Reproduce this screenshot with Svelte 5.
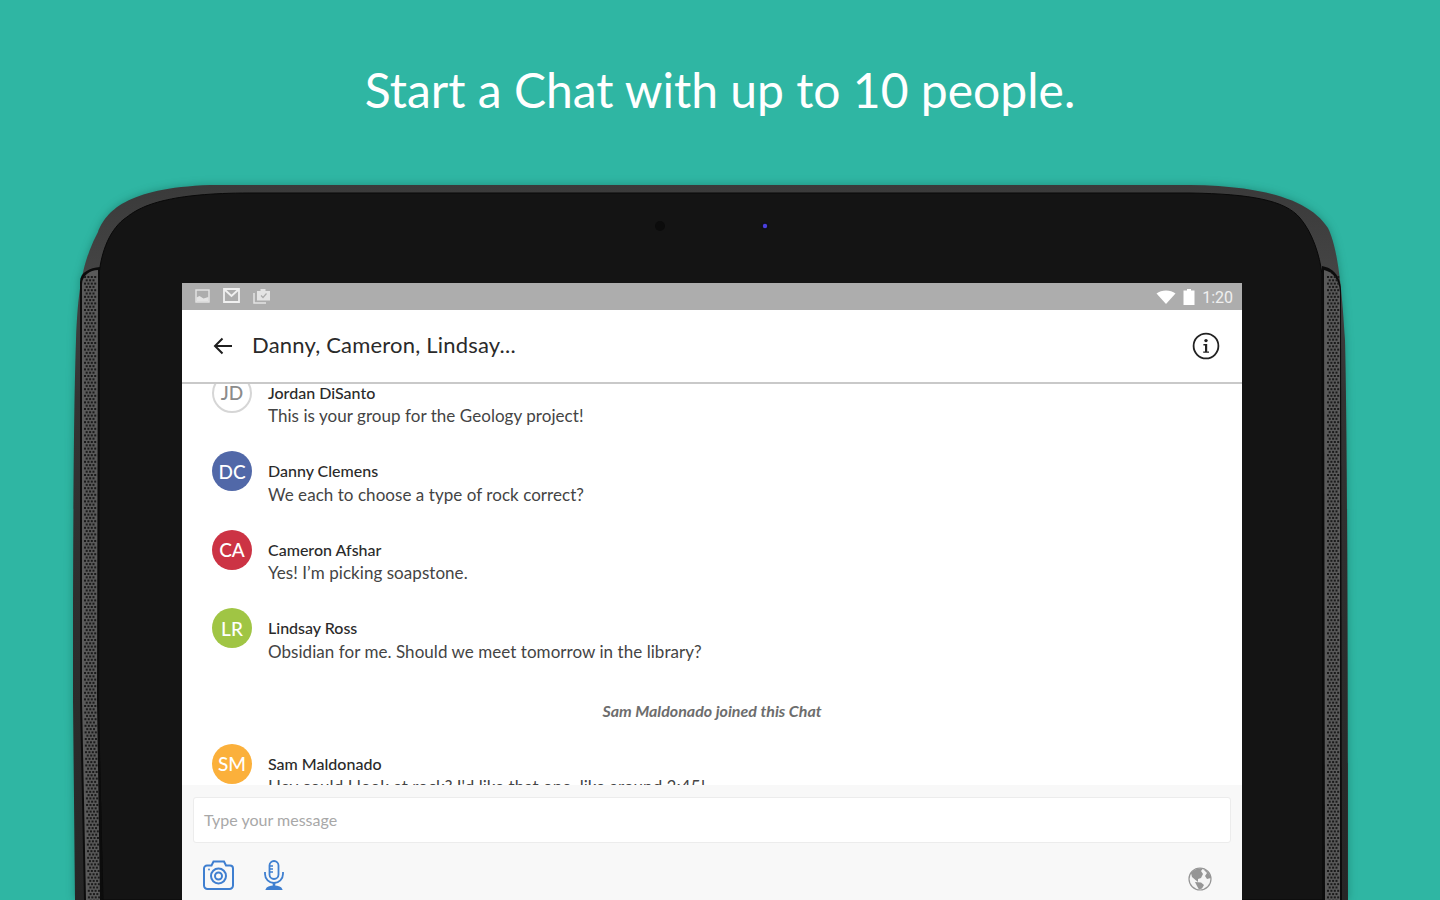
<script lang="ts">
  const messages = [
    { initials: 'JD', name: 'Jordan DiSanto', text: 'This is your group for the Geology project!', color: '', outline: true },
    { initials: 'DC', name: 'Danny Clemens', text: 'We each to choose a type of rock correct?', color: '#5168a8' },
    { initials: 'CA', name: 'Cameron Afshar', text: 'Yes! I’m picking soapstone.', color: '#cc3344' },
    { initials: 'LR', name: 'Lindsay Ross', text: 'Obsidian for me. Should we meet tomorrow in the library?', color: '#a0c544' }
  ];

  // speaker grille dots, staggered like the perforated strip on the reference
  function grille(start: number, drift: number) {
    const dots: { x: number; y: number }[] = [];
    let row = 0;
    for (let y = 276; y < 900; y += 3.3) {
      const left = start + (y > 700 ? (drift * (y - 700)) / 200 : 0);
      const odd = row % 2 === 1;
      for (let c = 0; c < (odd ? 3 : 4); c++) {
        dots.push({ x: left + c * 3.4 + (odd ? 1.7 : 0), y });
      }
      row++;
    }
    return dots;
  }

  const leftDots = grille(84, 4);
  const rightDots = grille(1327, 0);
</script>

<div class="page">
  <svg class="device" width="1440" height="900" viewBox="0 0 1440 900" aria-hidden="true">
    <defs>
      <linearGradient id="rim" x1="0" y1="0" x2="0" y2="1">
        <stop offset="0" stop-color="#3a3a3a" />
        <stop offset="0.12" stop-color="#444444" />
        <stop offset="0.3" stop-color="#333333" />
        <stop offset="1" stop-color="#262626" />
      </linearGradient>
    </defs>
    <path
      d="M75 900 L73 700 C73 500 74 400 76 340 C78 290 82 262 98 232 C106 212 125 188 210 185 L1190 185 C1265 186 1310 200 1328 228 C1338 248 1342 290 1345 340 C1347 420 1348 600 1348 900 Z"
      fill="url(#rim)"
    />
    <path
      d="M103 900 L98 700 L99 275 C101 252 110 228 127 217 C142 205 170 193 250 193 L1190 193 C1250 194 1285 200 1300 218 C1312 232 1320 255 1322 275 L1323 900 Z"
      fill="#141414"
      stroke="#090909"
      stroke-width="1"
    />
    <path d="M84 900 L80 700 L80 282 C80 272 90 268 100 267 L99 700 L103 900 Z" fill="#0c0c0c" />
    <path d="M86 900 L82 700 L82 284 C82 276 90 270 98 270 L97 700 L100 900 Z" fill="#5a5a5a" />
    <path d="M1322 266 C1332 268 1340 274 1341 290 L1342 900 L1323 900 Z" fill="#0c0c0c" />
    <path d="M1324 270 C1332 272 1339 278 1340 292 L1340 900 L1325 900 Z" fill="#5a5a5a" />
    {#each leftDots as d}
      <rect x={d.x} y={d.y} width="2" height="2" fill="#1a1a1a" />
    {/each}
    {#each rightDots as d}
      <rect x={d.x} y={d.y} width="2" height="2" fill="#1a1a1a" />
    {/each}
    <circle cx="660" cy="226" r="5" fill="#0c0c0c" />
    <circle cx="765" cy="226" r="4" fill="#101018" />
    <circle cx="765" cy="226" r="2.2" fill="#4a3fe0" />
  </svg>

  <h1>Start a Chat with up to 10 people.</h1>

  <div class="screen">
    <div class="status">
      <div class="status-icons">
        <svg width="15" height="14" viewBox="0 0 15 14">
          <rect x="1" y="1" width="13" height="12" fill="none" stroke="#e4e4e4" stroke-width="1.4" />
          <path d="M1.5 12.5 V8.5 L4.5 7 L8.5 9.5 L13.5 8 V12.5 Z" fill="#e4e4e4" />
        </svg>
        <svg class="mail" width="17" height="15" viewBox="0 0 17 15">
          <path d="M1 1 H16 V14 H1 Z" fill="none" stroke="#f0f0f0" stroke-width="1.8" />
          <path d="M1.5 1.5 L8.5 8 L15.5 1.5" fill="none" stroke="#f0f0f0" stroke-width="2" />
        </svg>
        <svg width="18" height="16" viewBox="0 0 18 16">
          <path d="M1 5 V15 H13" fill="none" stroke="#e4e4e4" stroke-width="1.5" />
          <path d="M4 3 H7.5 V1 H12.5 V3 H17 V12.5 H4 Z" fill="#e4e4e4" />
          <path d="M8 7.5 L10 9.5 L13.5 5.5" fill="none" stroke="#adadad" stroke-width="1.2" />
        </svg>
      </div>
      <div class="status-right">
        <svg width="20" height="14" viewBox="0 0 20 14"><path d="M0.5 3.5 C5.5 -0.5 14.5 -0.5 19.5 3.5 L10 14 Z" fill="#fff" /></svg>
        <svg width="12" height="16" viewBox="0 0 12 16"><path d="M4 0 H8 V1.5 H11.5 V16 H0.5 V1.5 H4 Z" fill="#fff" /></svg>
        <span class="clock">1:20</span>
      </div>
    </div>

    <header class="appbar">
      <svg class="back" width="20" height="18" viewBox="0 0 20 18">
        <path d="M19 9 H2 M9.5 1.5 L2 9 L9.5 16.5" fill="none" stroke="#1f1f1f" stroke-width="2" />
      </svg>
      <span class="title">Danny, Cameron, Lindsay...</span>
      <svg class="info" width="28" height="28" viewBox="0 0 28 28">
        <circle cx="14" cy="14" r="12.4" fill="none" stroke="#222" stroke-width="1.8" />
        <circle cx="14" cy="8.6" r="1.7" fill="#222" />
        <path d="M11.4 12 H15.2 V19.4 H17 V20.8 H11.2 V19.4 H13 V13.4 H11.4 Z" fill="#222" />
      </svg>
    </header>

    <div class="thread">
      <div class="scroller">
        {#each messages as m}
          <div class="message">
            <div class="avatar" class:outline={m.outline} style:background={m.color}>{m.initials}</div>
            <div class="body">
              <div class="name">{m.name}</div>
              <div class="text">{m.text}</div>
            </div>
          </div>
        {/each}

        <div class="notice">Sam Maldonado joined this Chat</div>

        <div class="message">
          <div class="avatar" style:background="#fbb03b">SM</div>
          <div class="body">
            <div class="name">Sam Maldonado</div>
            <div class="text">Hey could I look at rock? I'd like that one, like around 3:45!</div>
          </div>
        </div>
      </div>
    </div>

    <div class="composer">
      <div class="input">Type your message</div>
      <div class="tools">
        <svg class="camera" width="32" height="32" viewBox="0 0 32 32" fill="none" stroke="#3f7fd0" stroke-width="2">
          <path d="M4 6.5 H8.5 L10.5 2.5 H21 L23 6.5 H27 A3 3 0 0 1 30 9.5 V26.5 A3.5 3.5 0 0 1 26.5 30 H4.5 A3.5 3.5 0 0 1 1 26.5 V9.5 A3 3 0 0 1 4 6.5 Z" />
          <circle cx="15.5" cy="17" r="7.5" />
          <circle cx="15.5" cy="17" r="3.5" />
          <circle cx="6" cy="10.5" r="0.9" fill="#3f7fd0" stroke="none" />
        </svg>
        <svg class="mic" width="20" height="30" viewBox="0 0 20 30" fill="none" stroke="#3f7fd0" stroke-width="1.8">
          <rect x="5.5" y="1" width="9" height="18" rx="4.5" />
          <path d="M1 12 V14 A9 9 0 0 0 19 14 V12" />
          <path d="M5.5 6 H9 M5.5 9 H9 M5.5 12 H9" stroke-width="1.3" />
          <path d="M10 22 V26" stroke-width="2.6" />
          <path d="M2.5 29.5 C4 25.5 16 25.5 17.5 29.5 Z" fill="#3f7fd0" />
        </svg>
        <svg class="globe" width="24" height="24" viewBox="0 0 24 24">
          <circle cx="12" cy="12" r="11" fill="#f4f4f4" stroke="#959595" stroke-width="1.2" />
          <path d="M3 6 C6 1.5 12 0.5 15 1.5 L13 4 L15 7 L13 11 L10 12 L10 15 L7.5 13 L4 10 Z" fill="#959595" />
          <path d="M15 2 C19 3 22 7 22.8 11 L19 12 L17 9 L19 6 Z" fill="#959595" />
          <path d="M7 15 L13 15.5 L16 18 L14 21.5 L11 22.5 L9 19 Z" fill="#959595" />
        </svg>
      </div>
    </div>
  </div>
</div>

<style>
  :global(body) {
    margin: 0;
  }

  .page {
    position: relative;
    width: 1440px;
    height: 900px;
    overflow: hidden;
    background: #2fb6a3;
    font-family: Lato, 'Open Sans', sans-serif;
  }

  .device {
    position: absolute;
    left: 0;
    top: 0;
    filter: drop-shadow(0 0 4px rgba(0, 60, 50, 0.35));
  }

  h1 {
    position: relative;
    height: 283px;
    margin: 0;
    padding-top: 60px;
    box-sizing: border-box;
    text-align: center;
    font-size: 48px;
    line-height: 60px;
    font-weight: 400;
    color: #fff;
  }

  .screen {
    position: relative;
    width: 1060px;
    height: 617px;
    margin-left: 182px;
    display: flex;
    flex-direction: column;
    background: #fff;
  }

  .status {
    height: 27px;
    flex: none;
    display: flex;
    align-items: center;
    justify-content: space-between;
    padding: 0 9px 0 13px;
    background: #adadad;
  }

  .status-icons {
    display: flex;
    align-items: center;
    gap: 13px;
    margin-bottom: 2px;
  }

  .status-right {
    display: flex;
    align-items: center;
    gap: 7px;
  }

  .clock {
    padding-top: 1px;
    font-family: Roboto, sans-serif;
    font-size: 16px;
    color: #f0f0f0;
  }

  .appbar {
    height: 72px;
    flex: none;
    display: flex;
    align-items: center;
    padding: 0 22px 0 31px;
    border-bottom: 2px solid #c9c9c9;
  }

  .title {
    margin-left: 19px;
    padding-bottom: 4px;
    flex: 1;
    font-size: 22px;
    letter-spacing: 0.2px;
    color: #2a2a2a;
  }

  .thread {
    flex: 1;
    min-height: 0;
    overflow: hidden;
  }

  .scroller {
    display: flex;
    flex-direction: column;
    margin-top: -11.5px;
    padding-left: 30px;
  }

  .message {
    display: flex;
    gap: 16px;
    height: 78.6px;
  }

  .avatar {
    width: 40px;
    height: 40px;
    flex: none;
    box-sizing: border-box;
    border-radius: 50%;
    display: flex;
    align-items: center;
    justify-content: center;
    font-size: 19px;
    font-weight: 500;
    color: #fff;
  }

  .avatar.outline {
    border: 2px solid #d6d6d6;
    color: #8b8b8b;
  }

  .body {
    padding-top: 10px;
  }

  .name {
    font-size: 16px;
    line-height: 20px;
    font-weight: 500;
    color: #2a2a2a;
  }

  .text {
    margin-top: 1.5px;
    font-size: 17px;
    line-height: 24px;
    letter-spacing: 0.05px;
    color: #444;
  }

  .notice {
    height: 59px;
    margin: -2px 0 0 -30px;
    padding-top: 16px;
    box-sizing: border-box;
    text-align: center;
    font-size: 16px;
    font-style: italic;
    font-weight: 700;
    color: #6d6d6d;
  }

  .composer {
    height: 115px;
    flex: none;
    box-sizing: border-box;
    padding: 12px 11px 0;
    background: #f8f8f8;
  }

  .input {
    height: 46px;
    box-sizing: border-box;
    padding: 0 10px 2px;
    display: flex;
    align-items: center;
    background: #fff;
    border: 1px solid #ececec;
    border-radius: 3px;
    font-size: 16px;
    color: #a8a8a8;
  }

  .tools {
    display: flex;
    align-items: center;
    margin-top: 16px;
    padding-left: 10px;
  }

  .mic {
    margin-left: 29px;
  }

  .globe {
    margin-left: auto;
    margin-right: 19px;
    margin-top: 8px;
  }
</style>
